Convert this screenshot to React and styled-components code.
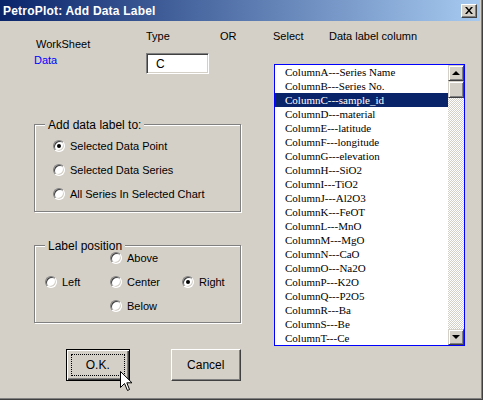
import React from "react";
import styled, { createGlobalStyle, css } from "styled-components";

const columns = [
  "ColumnA---Series Name",
  "ColumnB---Series No.",
  "ColumnC---sample_id",
  "ColumnD---material",
  "ColumnE---latitude",
  "ColumnF---longitude",
  "ColumnG---elevation",
  "ColumnH---SiO2",
  "ColumnI---TiO2",
  "ColumnJ---Al2O3",
  "ColumnK---FeOT",
  "ColumnL---MnO",
  "ColumnM---MgO",
  "ColumnN---CaO",
  "ColumnO---Na2O",
  "ColumnP---K2O",
  "ColumnQ---P2O5",
  "ColumnR---Ba",
  "ColumnS---Be",
  "ColumnT---Ce",
];

function App() {
  return (
    <>
      <GlobalStyle />
      <Window>
        <TitleBar>
          <Title>PetroPlot: Add Data Label</Title>
          <CloseBtn>
            <svg width="8" height="7" viewBox="0 0 8 7">
              <path d="M0 0h2l2 2.5L6 0h2L5 3.5 8 7H6L4 4.5 2 7H0l3-3.5z" fill="#000" />
            </svg>
          </CloseBtn>
        </TitleBar>
        <Body>
          <HeaderRow>
            <HeadCell w={112} top={8} left={2}>WorkSheet</HeadCell>
            <HeadCell w={74}>Type</HeadCell>
            <HeadCell w={53}>OR</HeadCell>
            <HeadCell w={56}>Select</HeadCell>
            <HeadCell>Data label column</HeadCell>
          </HeaderRow>
          <Main>
            <LeftCol>
              <DataRow>
                <SheetName>Data</SheetName>
                <TextBox>C</TextBox>
              </DataRow>
              <Group $mt={50}>
                <Legend>Add data label to:</Legend>
                <RadioList>
                  <RadioItem>
                    <Radio checked />
                    Selected Data Point
                  </RadioItem>
                  <RadioItem>
                    <Radio />
                    Selected Data Series
                  </RadioItem>
                  <RadioItem>
                    <Radio />
                    All Series In Selected Chart
                  </RadioItem>
                </RadioList>
              </Group>
              <Group $mt={33}>
                <Legend>Label position</Legend>
                <PositionGrid>
                  <RadioItem col={2} row={1}>
                    <Radio />
                    Above
                  </RadioItem>
                  <RadioItem col={1} row={2}>
                    <Radio />
                    Left
                  </RadioItem>
                  <RadioItem col={2} row={2}>
                    <Radio />
                    Center
                  </RadioItem>
                  <RadioItem col={3} row={2}>
                    <Radio checked />
                    Right
                  </RadioItem>
                  <RadioItem col={2} row={3}>
                    <Radio />
                    Below
                  </RadioItem>
                </PositionGrid>
              </Group>
              <ButtonRow>
                <Button w={64} primary>
                  O.K.
                </Button>
                <Button w={71}>Cancel</Button>
              </ButtonRow>
            </LeftCol>
            <RightCol>
              <ListBox>
                <Items>
                  {columns.map((c) => (
                    <Item key={c} selected={c === "ColumnC---sample_id"}>
                      {c}
                    </Item>
                  ))}
                </Items>
                <ScrollBar>
                  <ScrollBtn>
                    <Arrow up />
                  </ScrollBtn>
                  <ScrollBtn h={17} />
                  <Track />
                  <ScrollBtn>
                    <Arrow />
                  </ScrollBtn>
                </ScrollBar>
              </ListBox>
            </RightCol>
          </Main>
        </Body>
        <Cursor width="13" height="21" viewBox="0 0 13 21">
          <path
            d="M0.5 0.5 L0.5 16.5 L4.5 12.5 L7.5 19.5 L9.5 18.5 L6.8 11.8 L12 11.8 Z"
            fill="#fff"
            stroke="#000"
            strokeWidth="1"
          />
        </Cursor>
      </Window>
    </>
  );
}

export default App;

const GlobalStyle = createGlobalStyle`
  html, body {
    margin: 0;
    padding: 0;
    background: #d4d0c8;
  }
`;

const raised = css`
  border: 1px solid;
  border-color: #fff #404040 #404040 #fff;
  box-shadow: inset -1px -1px 0 #808080;
`;

const Window = styled.div`
  position: relative;
  width: 483px;
  height: 400px;
  box-sizing: border-box;
  background: #d4d0c8;
  border-right: 1px solid #404040;
  border-bottom: 1px solid #404040;
  box-shadow: inset -1px -1px 0 #808080;
  padding: 0 2px 2px 0;
  display: flex;
  flex-direction: column;
  font-family: "Liberation Sans", Arial, sans-serif;
  font-size: 11px;
  color: #000;
  overflow: hidden;
`;

const TitleBar = styled.div`
  height: 21px;
  display: flex;
  align-items: center;
  justify-content: space-between;
  padding: 0 3px 0 3px;
  background: linear-gradient(to right, #0a246a, #a6caf0);
`;

const Title = styled.div`
  color: #fff;
  font-weight: bold;
  font-size: 12px;
  letter-spacing: 0.2px;
`;

const CloseBtn = styled.div`
  width: 16px;
  height: 14px;
  box-sizing: border-box;
  background: #d4d0c8;
  ${raised};
  display: flex;
  align-items: center;
  justify-content: center;
`;

const Body = styled.div`
  display: flex;
  flex-direction: column;
  padding-top: 8px;
`;

const HeaderRow = styled.div`
  display: flex;
  padding-left: 34px;
`;

const HeadCell = styled.div`
  ${(p) => p.w && `width: ${p.w}px;`}
  padding-top: ${(p) => p.top || 0}px;
  padding-left: ${(p) => p.left || 0}px;
  box-sizing: border-box;
  line-height: 14px;
  white-space: nowrap;
`;

const Main = styled.div`
  display: flex;
`;

const LeftCol = styled.div`
  width: 241px;
  padding-left: 34px;
  box-sizing: border-box;
  display: flex;
  flex-direction: column;
`;

const DataRow = styled.div`
  display: flex;
  margin-top: 2px;
`;

const SheetName = styled.div`
  width: 112px;
  color: #0000ff;
  line-height: 14px;
`;

const TextBox = styled.div`
  width: 63px;
  height: 21px;
  box-sizing: border-box;
  background: #fff;
  border: 1px solid;
  border-color: #808080 #fff #fff #808080;
  box-shadow: inset 1px 1px 0 #404040, inset -1px -1px 0 #d4d0c8;
  padding-left: 9px;
  display: flex;
  align-items: center;
  font-size: 12px;
`;

const Group = styled.div`
  position: relative;
  width: 207px;
  box-sizing: border-box;
  margin-top: ${(p) => p.$mt}px;
  border: 1px solid #808080;
  box-shadow: inset 1px 1px 0 #fff, 1px 1px 0 #fff;
`;

const Legend = styled.div`
  position: absolute;
  top: -7px;
  left: 10px;
  padding: 0 3px;
  line-height: 14px;
  background: #d4d0c8;
  font-size: 12px;
`;

const RadioList = styled.div`
  display: flex;
  flex-direction: column;
  padding: 9px 0 5px 18px;
`;

const PositionGrid = styled.div`
  display: grid;
  grid-template-columns: 65px 72px auto;
  grid-template-rows: repeat(3, 24px);
  padding: 0 0 4px 10px;
`;

const RadioItem = styled.div`
  height: 24px;
  display: flex;
  align-items: center;
  gap: 5px;
  white-space: nowrap;
  ${(p) => p.col && `grid-column: ${p.col}; grid-row: ${p.row};`}
`;

const Radio = styled.span`
  position: relative;
  width: 12px;
  height: 12px;
  box-sizing: border-box;
  border-radius: 50%;
  background: #fff;
  border: 1px solid;
  border-color: #808080 #fff #fff #808080;
  box-shadow: inset 1px 1px 0 #404040, inset -1px -1px 0 #d4d0c8;
  flex: none;
  ${(p) =>
    p.checked &&
    `
    &::after {
      content: "";
      position: absolute;
      left: 3px;
      top: 3px;
      width: 4px;
      height: 4px;
      border-radius: 50%;
      background: #000;
    }
  `}
`;

const ButtonRow = styled.div`
  display: flex;
  gap: 41px;
  margin-top: 26px;
  padding-left: 32px;
`;

const Button = styled.div`
  position: relative;
  width: ${(p) => p.w}px;
  height: 32px;
  box-sizing: border-box;
  display: flex;
  align-items: center;
  justify-content: center;
  background: #d4d0c8;
  font-size: 12px;
  ${(p) =>
    p.primary
      ? `
    border: 1px solid #000;
    box-shadow: inset 1px 1px 0 #fff, inset -1px -1px 0 #404040, inset -2px -2px 0 #808080;
    &::after {
      content: "";
      position: absolute;
      inset: 4px;
      border: 1px dotted #000;
    }
  `
      : raised}
`;

const RightCol = styled.div`
  flex: 1;
`;

const ListBox = styled.div`
  margin: 13px 0 0 33px;
  width: 191px;
  height: 282px;
  box-sizing: border-box;
  border: 1px solid #0000ff;
  background: #fff;
  display: flex;
  overflow: hidden;
`;

const Items = styled.div`
  flex: 1;
  display: flex;
  flex-direction: column;
`;

const Item = styled.div`
  height: 14px;
  line-height: 14px;
  padding-left: 10px;
  font-family: "Liberation Serif", "Times New Roman", serif;
  font-size: 11px;
  white-space: nowrap;
  flex: none;
  background: ${(p) => (p.selected ? "#0a246a" : "transparent")};
  color: ${(p) => (p.selected ? "#fff" : "#000")};
`;

const ScrollBar = styled.div`
  width: 16px;
  display: flex;
  flex-direction: column;
`;

const ScrollBtn = styled.div`
  height: ${(p) => p.h || 16}px;
  box-sizing: border-box;
  flex: none;
  background: #d4d0c8;
  border: 1px solid;
  border-color: #d4d0c8 #404040 #404040 #d4d0c8;
  box-shadow: inset 1px 1px 0 #fff, inset -1px -1px 0 #808080;
  display: flex;
  align-items: center;
  justify-content: center;
`;

const Track = styled.div`
  flex: 1;
  background-color: #fff;
  background-image: conic-gradient(#d4d0c8 25%, #fff 0 50%, #d4d0c8 0 75%, #fff 0);
  background-size: 2px 2px;
`;

const Arrow = styled.span`
  width: 0;
  height: 0;
  border-left: 4px solid transparent;
  border-right: 4px solid transparent;
  ${(p) =>
    p.up ? "border-bottom: 4px solid #000;" : "border-top: 4px solid #000;"}
`;

const Cursor = styled.svg`
  position: absolute;
  left: 120px;
  top: 371px;
`;
